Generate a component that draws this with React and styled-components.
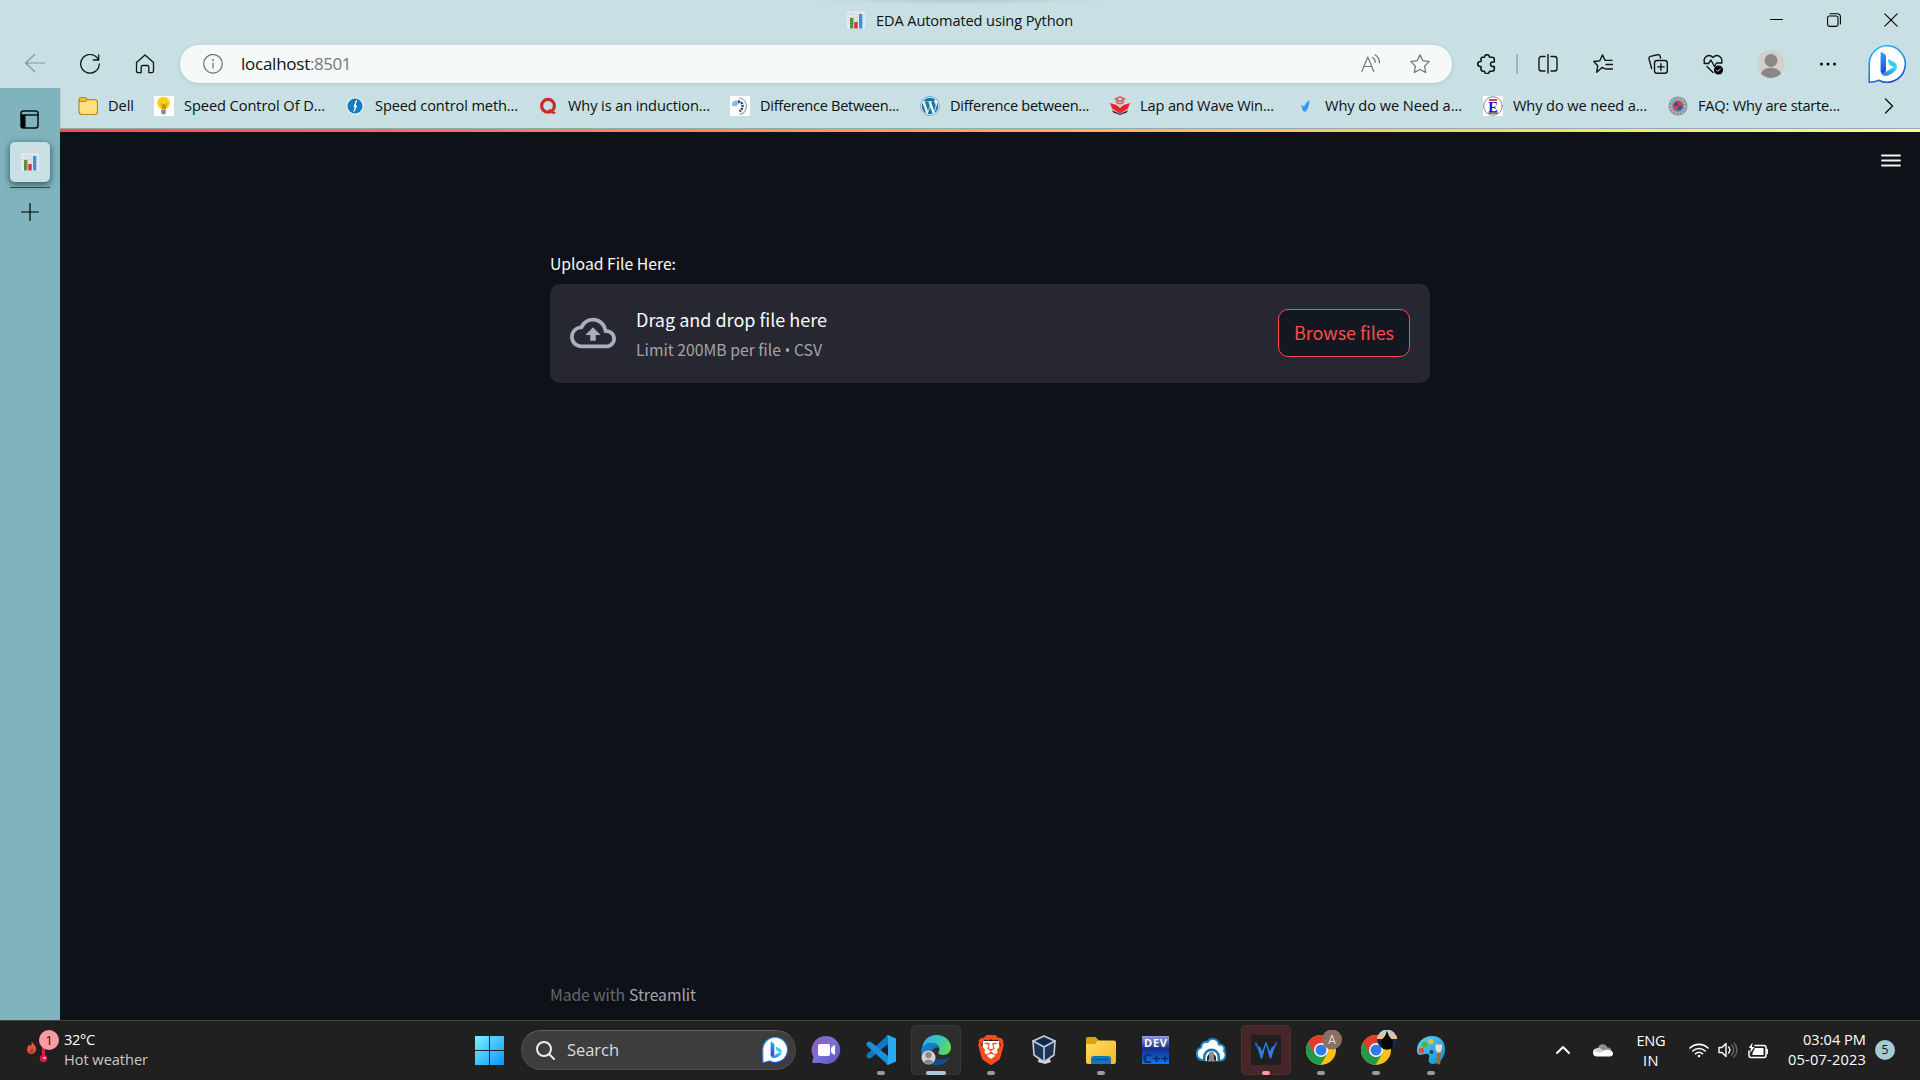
import React, { useLayoutEffect, useRef, useState } from 'react';
import styled, { createGlobalStyle } from 'styled-components';
import { SiBrave } from 'react-icons/si';
import { FaWordpress } from 'react-icons/fa';

const GlobalStyle = createGlobalStyle`
  html, body { margin: 0; padding: 0; background: #0e1117; overflow: hidden; }
  * { box-sizing: border-box; }
  svg { display: block; flex: none; }
`;

const ui = '"Open Sans", "Noto Sans", sans-serif';
const source = '"Noto Sans CJK SC", "Noto Sans", sans-serif';

/* Text whose tracking is adjusted so that it fills a known width */
const Label = styled.span`
  display: block;
  flex: none;
  width: max-content;
  white-space: pre;
  font-family: ${p => (p.$source ? source : ui)};
  font-size: ${p => p.$size || 14.6}px;
  line-height: ${p => p.$line || 20}px;
  color: ${p => p.$color || '#0b1112'};
`;
const Bullet = styled.span`
  font-family: "Open Sans", sans-serif;
`;

function Text({ width, children, ...rest }) {
  const ref = useRef(null);
  const [spacing, setSpacing] = useState(0);
  useLayoutEffect(() => {
    if (!width) return;
    const chars = ref.current.textContent.length;
    setSpacing((width + 1 - ref.current.getBoundingClientRect().width) / chars);
  }, [width]);
  return <Label ref={ref} style={{ letterSpacing: spacing }} {...rest}>{children}</Label>;
}

const Screen = styled.div`
  width: 1920px;
  height: 1080px;
  display: flex;
  flex-direction: column;
  background: #c8dfe3;
  overflow: hidden;
`;
const TitleBar = styled.header`
  height: 40px;
  flex: none;
  display: flex;
  align-items: center;
  padding-left: 847px;
  background: radial-gradient(ellipse 150px 5px at 960px 0, #b5cbcf, #c8dfe3);
`;
const TabTitle = styled.div`
  display: flex;
  align-items: center;
  gap: 11px;
`;
const WindowControls = styled.div`
  display: flex;
  align-items: center;
  margin-left: auto;
`;
const Cell = styled.div`
  width: ${p => p.$w || 55}px;
  height: 40px;
  flex: none;
  display: flex;
  align-items: center;
  justify-content: center;
`;
const Toolbar = styled.div`
  height: 48px;
  flex: none;
  display: flex;
  align-items: center;
  padding-left: 7.5px;
`;
const AddressBar = styled.div`
  width: 1272px;
  height: 38px;
  flex: none;
  margin: 0 7px 0 7.5px;
  padding: 0 22px 0 23px;
  display: flex;
  align-items: center;
  border-radius: 19px;
  background: #f5f9fa;
  box-shadow: 0 1px 4px rgba(90, 130, 138, 0.22);
`;
const Url = styled.div`
  display: flex;
  margin-left: 18px;
`;
const AddressActions = styled.div`
  display: flex;
  gap: 29px;
  margin-left: auto;
`;
const Divider = styled.div`
  width: 2px;
  height: 20px;
  margin: 0 2px;
  background: #9fb3b6;
`;
const Middle = styled.div`
  height: 932px;
  flex: none;
  display: flex;
`;
const Sidebar = styled.nav`
  width: 60px;
  flex: none;
  display: flex;
  flex-direction: column;
  align-items: center;
  padding-top: 22px;
  background: #7fb4bf;
`;
const PanelToggle = styled.div`
  padding-right: 2px;
`;
const NewTab = styled.div`
  padding-right: 1px;
`;
const SideTab = styled.div`
  width: 40px;
  height: 40px;
  margin-top: 13px;
  display: flex;
  align-items: center;
  justify-content: center;
  border-radius: 5px;
  background: #c8dfe3;
  box-shadow: 0 2px 6px 1px rgba(20, 45, 50, 0.6);
`;
const SideRule = styled.div`
  width: 40px;
  height: 1px;
  margin: 5px 0 15px;
  background: #2f4b50;
`;
const Frame = styled.div`
  flex: 1;
  min-width: 0;
  display: flex;
  flex-direction: column;
`;
const Bookmarks = styled.div`
  height: 41px;
  flex: none;
  display: flex;
  align-items: center;
  padding: 0 0 4px 17px;
  border-bottom: 1px solid #90aaae;
  border-left: 1px solid #b9d0d4;
`;
const Bookmark = styled.div`
  width: ${p => p.$w}px;
  flex: none;
  display: flex;
  align-items: center;
  gap: 10px;
`;
const Raised = styled.div`
  padding-bottom: ${p => p.$by || 2}px;
`;
const Decoration = styled.div`
  height: 3px;
  flex: none;
  background: linear-gradient(90deg, #ff4b4b, #fffd80);
`;
const Page = styled.main`
  flex: 1;
  display: flex;
  flex-direction: column;
  background: #0e1117;
`;
const MenuRow = styled.div`
  display: flex;
  justify-content: flex-end;
  padding: 22px 19px 0 0;
`;
const Block = styled.section`
  width: 880px;
  flex: 1;
  margin: 83px 0 0 490px;
  display: flex;
  flex-direction: column;
`;
const Dropzone = styled.div`
  height: 99px;
  margin-top: 7px;
  padding: 0 20px 2px;
  display: flex;
  align-items: center;
  border-radius: 10px;
  background: #262730;
`;
const DropText = styled.div`
  margin-left: 20px;
  display: flex;
  flex-direction: column;
`;
const BrowseButton = styled.button`
  width: 132px;
  height: 48px;
  margin-left: auto;
  padding: 0 0 1px;
  display: flex;
  align-items: center;
  justify-content: center;
  border: 1px solid #ff4b4b;
  border-radius: 10px;
  background: #131720;
`;
const Footer = styled.footer`
  display: flex;
  gap: 4px;
  margin: auto 0 12px;
`;
const Taskbar = styled.footer`
  height: 60px;
  flex: none;
  display: flex;
  align-items: center;
  padding-bottom: 1px;
  border-top: 1px solid #454647;
  background: #202020;
`;
const Weather = styled.div`
  width: 461px;
  display: flex;
  align-items: center;
  padding-left: 25px;
`;
const WeatherText = styled.div`
  margin-left: -1px;
  padding-bottom: 3px;
`;
const Stack = styled.div`
  display: flex;
  flex-direction: column;
  align-items: ${p => p.$align || 'flex-start'};
`;
const TaskCell = styled.div`
  position: relative;
  width: 55px;
  height: 58px;
  flex: none;
  display: flex;
  align-items: center;
  justify-content: center;
`;
const StartCell = styled(TaskCell)`
  width: 57px;
`;
const Tile = styled.div`
  width: 50px;
  height: 50px;
  display: flex;
  align-items: center;
  justify-content: center;
  border-radius: 5px;
  background: ${p => p.$bg || 'transparent'};
  box-shadow: ${p => (p.$bg ? 'inset 0 0 0 1px rgba(255,255,255,0.05)' : 'none')};
`;
const Indicator = styled.div`
  position: absolute;
  bottom: 4px;
  left: 50%;
  transform: translateX(-50%);
  width: ${p => p.$w || 8}px;
  height: 4px;
  border-radius: 2px;
  background: ${p => p.$c || '#9b9b9b'};
`;
const SearchBox = styled.div`
  width: 275px;
  height: 40px;
  margin: 0 2px 0 3px;
  padding: 0 7px 0 14px;
  flex: none;
  display: flex;
  align-items: center;
  gap: 12px;
  border-radius: 20px;
  border: 1px solid #4b4b4b;
  border-top-color: #606060;
  background: #3d3d3d;
`;
const Push = styled.div`
  margin-left: auto;
`;
const Tray = styled.div`
  margin-left: auto;
  padding-right: 25px;
  display: flex;
  align-items: center;
`;
const TraySlot = styled.div`
  width: ${p => p.$w}px;
  flex: none;
  display: flex;
  justify-content: center;
`;
const CountBadge = styled.div`
  width: 20px;
  height: 20px;
  margin-left: 9px;
  display: flex;
  align-items: center;
  justify-content: center;
  border-radius: 50%;
  background: #a6cbd4;
`;

const Svg = ({ w = 20, h, box, stroke = '#111718', sw = 1.5, fill = 'none', children }) => (
  <svg width={w} height={h || w} viewBox={box || `0 0 ${w} ${h || w}`} fill={fill} stroke={stroke}
    strokeWidth={sw} strokeLinecap="round" strokeLinejoin="round">{children}</svg>
);

const ChartIcon = ({ s = 18 }) => (
  <Svg w={s} box="0 0 18 18" stroke="none">
    <rect width="18" height="18" rx="1.5" fill="#e6ebf1" />
    <path d="M1 3.500h16M1 6.500h16M1 9.500h16M1 12.500h16M4 1v16M7 1v16M10 1v16M13 1v16" stroke="#ccd3dc" strokeWidth=".7" />
    <rect x="3" y="7" width="3.4" height="10.5" fill="#5c913b" />
    <rect x="7.3" y="11" width="3.4" height="6.5" fill="#dd2e44" />
    <rect x="12" y="3" width="3.4" height="14.5" fill="#3b94d9" />
  </Svg>
);

const BingBubble = ({ s = 38, id }) => (
  <Svg w={s} box="0 0 38 38" stroke="none">
    <defs>
      <linearGradient id={`${id}r`} x1=".2" y1="0" x2=".6" y2="1">
        <stop offset="0" stopColor="#22b5f0" /><stop offset=".55" stopColor="#2f86e8" /><stop offset="1" stopColor="#1c4fd0" />
      </linearGradient>
      <linearGradient id={`${id}a`} x1="0" y1="0" x2="0" y2="1">
        <stop offset="0" stopColor="#2fa5f5" /><stop offset="1" stopColor="#1b48cf" />
      </linearGradient>
      <linearGradient id={`${id}b`} x1="1" y1="0" x2="0" y2="1">
        <stop offset="0" stopColor="#38dcf0" /><stop offset="1" stopColor="#2a6be6" />
      </linearGradient>
    </defs>
    <path d="M19 .8a18.2 18.2 0 1 1-8.2 34.400c-1 .5-4.800 2-9.600 2V19A18 18 0 0 1 19 .8z" fill="#fff" stroke={`url(#${id}r)`} strokeWidth="1.600" />
    <path d="M12.600 7.800c0-.8 1-.9 1.700-.4l2.900 2c.6.4.8 1 .8 1.700v14.200c0 2-1.600 3.100-2.800 3.100-1.500 0-2.600-1.300-2.600-3z" fill={`url(#${id}a)`} />
    <path d="M20 15c-.2-.6.3-.9.9-.6l4.800 2.500c2.300 1.300 3.200 3 3.200 5 0 1.200-.5 2.200-1.200 3-.2-2.100-1.300-2.800-3-3.500l-2.300-1c-.9-.4-1.200-.9-1.500-1.700z" fill="#35cdf0" />
    <path d="M28 24.700c-1 2-3.300 3.200-5.600 4.500-2.400 1.400-4.500 2.200-7 1.200-1.700-.7-2.700-2.600-2.700-4.500.8 2.200 3.200 2.300 5 1.200l7.300-4.500c1.500-.9 3 .2 3 2.100z" fill={`url(#${id}b)`} />
  </Svg>
);

const Chrome = ({ children }) => (
  <Svg w={42} h={40} box="-1 0 42 40" stroke="none">
    <circle cx="20" cy="20" r="15" fill="#fbc116" />
    <path d="M7 12.500a15 15 0 0 0 12.500 22.500L26.500 23.500 20 20z" fill="#229a4a" />
    <path d="M7 12.500A15 15 0 0 1 33 12.500L20 13.200 13.500 23.500z" fill="#e33b2e" />
    <circle cx="20" cy="20" r="7" fill="#fff" />
    <circle cx="20" cy="20" r="5.500" fill="#2e7bee" />
    {children}
  </Svg>
);

const EdgeIcon = () => (
  <Svg w={30} stroke="none">
    <defs>
      <linearGradient id="eg1" x1="0" y1=".3" x2="1" y2=".6"><stop offset="0" stopColor="#2bb0e6" /><stop offset=".5" stopColor="#35c5c0" /><stop offset="1" stopColor="#62dd52" /></linearGradient>
      <linearGradient id="eg2" x1="0" y1="0" x2=".8" y2="1"><stop offset="0" stopColor="#1b8fdc" /><stop offset="1" stopColor="#0b4f9e" /></linearGradient>
    </defs>
    <path d="M1 13C2 5 8 0 15.500 0 24 0 30 6 30 12.500c0 4.500-3.500 7.500-7.800 7.500-3.500 0-5-1.200-5-2.200 0-.8 1.300-1.500 1.300-3.800C18.500 10.500 14.500 8 10.500 8 6 8 2.500 10 1 13z" fill="url(#eg1)" />
    <path d="M.1 15.500C.5 11 5 8 10.500 8c4 0 7.500 2.200 8 5.500-3-2-7.500-.3-8 4.500-.5 5 3.500 10 9.500 11.200-1.500.5-3 .8-5 .8C6 30 0 23 .1 15.500z" fill="url(#eg2)" />
    <path d="M11 15c-1.500 6 3.500 10 9 9.500 3 0 5.500-1 7.300-1.800.7-.3 1.200.3.800 1C25.500 27.500 22 30 17 30 11 30 6 24 11 15z" fill="#104e91" />
    <circle cx="7.500" cy="22.500" r="7" fill="#d2d0ce" />
    <circle cx="7.500" cy="20" r="3.100" fill="#8a8886" />
    <path d="M2.800 27.500c1-4 8.400-4 9.400 0a7 7 0 0 1-9.400 0z" fill="#8a8886" />
  </Svg>
);

const bookmarks = [
  { w: 76, t: 'Dell', tw: 25, icon: <Svg w={20} stroke="#b98a1c" sw={1.2}><path d="M1 5.200V15.500a3 3 0 0 0 3 3H16.500a3 3 0 0 0 3-3V6.700a3 3 0 0 0-3-3H9" fill="#ffdf80" /><path d="M1 4.500Q1 1.500 3.500 1.500H6.500Q8 1.500 9.200 3.300Q8 5.500 6.500 5.500H1z" fill="#eec22e" /></Svg> },
  { w: 191, t: 'Speed Control Of D...', tw: 140, icon: <Svg w={20} stroke="none"><path fill="#fff" d="M0 0h20v20H0z" /><circle cx="9.500" cy="7" r="6.300" fill="#fdd017" /><path d="M6 10h7l-1.500 4.500h-4z" fill="#fdd017" /><path d="M7.500 7.500 9 13l1-5 1 5 1.500-5.500" stroke="#a17e00" strokeWidth=".8" fill="none" /><path d="M7.200 14h4.600v3l-1.500 1.600H8.700L7.200 17z" fill="#8c8792" /></Svg> },
  { w: 193, t: 'Speed control meth...', tw: 142, icon: <Svg w={20} stroke="none"><circle cx="10" cy="10" r="9" fill="#e5eef3" /><circle cx="10" cy="10" r="7.500" fill="#147cc2" /><path d="m11.500 4.500-2.500 6 1.500.3-1.500 4.700 2.500-5.500-1.300-.5z" fill="#fff" stroke="#fff" strokeWidth="1" /></Svg> },
  { w: 192, t: 'Why is an induction...', tw: 141, icon: <Svg w={20} stroke="#c92c2c" sw={3.2}><circle cx="10" cy="9.800" r="6.400" /><path d="m11.500 14 3 2.700h2" strokeWidth="2" /></Svg> },
  { w: 190, t: 'Difference Between...', tw: 138, icon: <Svg w={20} stroke="none"><path fill="#fff" d="M0 0h20v20H0z" /><path d="M2 9.500C1.500 6 4 4 7.500 4.500L9 7.500 6.500 10l-3 .5z" fill="#8dbbd6" /><path d="M8 5.500c5 0 6.500 6 1.500 10" stroke="#24496e" strokeWidth="2.400" strokeDasharray="2.200 .8" strokeLinecap="butt" fill="none" /><path d="M9.500 2c9 1 9 15 .5 16.500" stroke="#7ea2b8" strokeWidth="1.200" fill="none" /></Svg> },
  { w: 190, t: 'Difference between...', tw: 138, icon: <Svg w={20} stroke="none"><circle cx="10" cy="10" r="10" fill="#e7f3f7" /><foreignObject width="20" height="20"><FaWordpress size={20} color="#1876a3" /></foreignObject></Svg> },
  { w: 185, t: 'Lap and Wave Win...', tw: 133, icon: <Svg w={20} stroke="none"><path d="M5.500 3 10 .8 14.500 3 10 5.500zM6.500 5.500c1 3 6 3 7 0" stroke="#d8575b" fill="none" /><path d="m0 7 7 2.300L10 12l3-2.700L20 7l-2 5.500-8 5.200-8-5.200z" fill="#ee2328" /><path d="m2 14 1 2.500 7 2.500 7-2.500 1-2.500-8 4z" fill="#34353a" /></Svg> },
  { w: 188, t: 'Why do we Need a...', tw: 136, icon: <Svg w={20} stroke="none"><path d="M6.500 9c1 .2 2 1 2.500 2 1-3 3-5.500 5.500-7-.3 5.500-1.500 9-3.500 11.200-1 .8-2 .6-2.700-.3C7 13 6.500 11 6.500 9z" fill="#3399ff" /></Svg> },
  { w: 185, t: 'Why do we need a...', tw: 133, icon: <Svg w={20} stroke="none"><path fill="#fff" d="M0 0h20v20H0z" /><circle cx="10" cy="10" r="9.300" stroke="#777" strokeWidth=".9" /><path d="M6 3h8v2H6z" fill="#e0453c" /><text x="10" y="15.500" textAnchor="middle" fontFamily="Liberation Serif" fontWeight="bold" fontSize="14.500" fill="#1414c8">E</text><path d="M6 17h8" stroke="#444" strokeWidth="1.500" /></Svg> },
  { w: 189, t: 'FAQ: Why are starte...', tw: 141, icon: <Svg w={20} stroke="none"><circle cx="10" cy="10" r="9.500" fill="#7f98a5" /><circle cx="10" cy="10" r="7.300" stroke="#d6b48a" strokeWidth="2" strokeDasharray="1.800 1.400" strokeLinecap="butt" /><circle cx="10" cy="10" r="4.700" fill="#2d54a5" /><path d="M10 5.300A4.700 4.700 0 0 1 14.700 10H10v4.700A4.700 4.700 0 0 1 5.300 10H10z" fill="#e23c3f" /></Svg> },
];

const tasks = [
  { icon: <Svg w={30} stroke="none"><defs><linearGradient id="cg" x1="0" y1="0" x2="1" y2="1"><stop offset="0" stopColor="#8d5bb0" /><stop offset=".5" stopColor="#7b71d8" /><stop offset="1" stopColor="#4f52c4" /></linearGradient></defs><path d="M15 1a14 14 0 1 1-5 27H2.500c-1 0-1.500-.7-1.200-1.600L2.500 22A14 14 0 0 1 15 1z" fill="url(#cg)" /><rect x="7" y="9" width="12" height="12" rx="2" fill="#fff" /><path d="m20 13 2.500-2.500c.7-.7 1.500-.3 1.500.5v8c0 .8-.8 1.200-1.500.5L20 17z" fill="#fff" /></Svg> },
  { ind: 8, icon: <Svg w={30} stroke="none"><path d="M22 0 1 19l-.8 2.500 2.500 2L5 23 22 9z" fill="#0f79be" /><path d="M22 30 1 11 .2 8.500l2.500-2L5 7l17 14z" fill="#1a8fd6" /><path d="m22 0 8 3.500v23L22 30l-1.500-1 1.500-1V2l-1.500-1z" fill="#29a9f2" /></Svg> },
  { bg: '#2d2d2d', ind: 20, c: '#a5cbd4', icon: <EdgeIcon /> },
  { ind: 8, icon: <Svg w={30} stroke="none"><path d="M7 6h16l1 12-9 8-9-8z" fill="#fff" /><foreignObject width="30" height="30"><SiBrave size={30} color="#fb4b1d" /></foreignObject></Svg> },
  { icon: <Svg w={30} box="1 0 30 30" stroke="#c5cdd9" sw={1.6}><path d="M9 22h10l2 5-6 2-7-2z" fill="#d5d8e0" stroke="none" /><path d="m14 1 11 5-1 14-10 7-10-7L3 6z" fill="#1d3558" /><path d="M3 6l11 6 11-6M14 12v15" /><path d="m7 6 7-3 7 3-7 4z" fill="#12294a" stroke="none" /></Svg> },
  { ind: 8, icon: <Svg w={30} stroke="none"><defs><linearGradient id="fg" x1="0" y1="0" x2="1" y2="1"><stop offset="0" stopColor="#ffdb66" /><stop offset="1" stopColor="#f6b920" /></linearGradient></defs><path d="M0 4Q0 2 2 2h7.500l3.500 3.500V10H0z" fill="#dda10e" /><path d="M0 9h9l3-3.500h16q2 0 2 2V26q0 3-2 3H2q-2 0-2-3z" fill="url(#fg)" /><path d="M5 29v-5q0-3 3-3h14q3 0 3 3v5z" fill="#1475bd" /><path d="M9 24.500h12" stroke="#0c4f8a" strokeWidth="1.200" /></Svg> },
  { icon: <Svg w={30} h={32} stroke="none"><defs><linearGradient id="dg" x1="0" y1="0" x2="0" y2="1"><stop offset="0" stopColor="#939fd8" /><stop offset=".45" stopColor="#172b8c" /><stop offset="1" stopColor="#0e79ec" /></linearGradient></defs><path d="M1 2h27v28H1z" fill="url(#dg)" /><text x="14.500" y="13" textAnchor="middle" fontFamily="Open Sans" fontWeight="bold" fontSize="11" textLength="23" fill="#fff">DEV</text><text x="15" y="28.500" textAnchor="middle" fontFamily="Open Sans" fontWeight="bold" fontSize="11.500" textLength="27" lengthAdjust="spacingAndGlyphs" fill="#083165">C++</text></Svg> },
  { icon: <Svg w={30} stroke="none"><path d="M6 25a6.500 6.500 0 0 1-1-12.500C5 8 9 6 11.500 7 14 2 22 3 23 9.500c4-.5 6.500 3 5 6.500 3 3 1.500 9-3 9.500z" fill="#fff" stroke="#1982ba" strokeWidth="2" /><path d="M7 26v-4a8.500 8.500 0 0 1 17 0v4z" fill="#1879ad" /><path d="M9.500 26v-4a6 6 0 0 1 12 0v4z" fill="#fff" /><path d="M11 27v-4a4.500 4.500 0 0 1 9 0v4z" fill="#202020" /><path d="M13 24v-5a2.500 2.500 0 0 1 5 0v5l2 2.500h-9z" fill="#8a8a8a" /></Svg> },
  { bg: '#462628', ind: 8, c: '#ff99a4', icon: <Svg w={30} stroke="#2580e8" sw={2.2}><path fill="#202020" stroke="none" d="M0 0h30v30H0z" /><path d="M5 7.500v2.500M25 7.500v2.500" strokeWidth="1.200" /><path d="m6 10 2 5 2.500 8 2-8 2.500-7 2.500 7 2 8 2.500-8 2-5" strokeWidth="1.400" /><path d="m8.500 13 2 8 1.500-5M21.500 13l-2 8-1.500-5" strokeWidth="2.400" /></Svg> },
  { ind: 8, icon: <Chrome><circle cx="31" cy="9.500" r="10" fill="#8d6e63" /><text x="31" y="14" textAnchor="middle" fontFamily="Roboto" fontSize="12" fill="#e3d9d5">A</text></Chrome> },
  { ind: 8, icon: <Chrome><clipPath id="av"><circle cx="31" cy="9.500" r="10" /></clipPath><g clipPath="url(#av)"><path fill="#c6c8cb" d="M20-1h22v10H20z" /><path fill="#e4c58e" d="M20 5h22v4H20z" /><path fill="#172b3e" d="M20 9h22v12H20z" /><path fill="#050607" d="m31 1 2 5 4 5-1 9H26l-1-9 4-5z" /></g></Chrome> },
  { ind: 8, icon: <Svg w={30} stroke="none"><defs><linearGradient id="pg" x1="0" y1="0" x2="1" y2="1"><stop offset="0" stopColor="#59d7f5" /><stop offset="1" stopColor="#1686ce" /></linearGradient></defs><path d="M16 1C25 1 29 7 29 14c0 8-5 15-12 15-4 0-5-3-4-6 1-4-1-5-4-4-4 1-7 2-8-2C0 8 7 1 16 1z" fill="url(#pg)" /><circle cx="15" cy="6.500" r="2.600" fill="#f3c21a" /><circle cx="8.500" cy="9.500" r="2.700" fill="#52b22c" /><circle cx="5.500" cy="15.500" r="2.700" fill="#e0532b" /><circle cx="15.500" cy="17" r="2" fill="#124c7d" /><path d="M21 17h3.400v11q-1.700 3-3.400 0z" fill="#b5661b" /><path d="M19.500 9.500h6.500v4l-1.600 4H21l-1.500-4z" fill="#eddcc7" /></Svg> },
];

export default function App() {
  return (
    <Screen>
      <GlobalStyle />
      <TitleBar>
        <TabTitle>
          <ChartIcon />
          <Text width={196}>EDA Automated using Python</Text>
        </TabTitle>
        <WindowControls>
          <Cell $w={57}><Svg w={14} sw={1} stroke="#000"><path d="M.5 6.500h12" /></Svg></Cell>
          <Cell $w={57}><Svg w={14} sw={1.1} stroke="#000"><rect x=".6" y="3" width="10.400" height="10.400" rx="1.800" /><path d="M3 .7h7.500a2.900 2.900 0 0 1 2.900 2.900V11" /></Svg></Cell>
          <Cell $w={58}><Svg w={14} sw={1.1} stroke="#000"><path d="m.8.8 12.400 12.400M13.200.8.800 13.200" /></Svg></Cell>
        </WindowControls>
      </TitleBar>
      <Toolbar>
        <Cell><Svg sw={1.2} stroke="#82989c"><path d="M.5 9h19M9.500.5.800 9l8.700 8.500" /></Svg></Cell>
        <Cell><Svg sw={1.3}><path d="M18.500 6A9.300 9.300 0 1 0 19.300 10M18.700.8V6h-5.400" /></Svg></Cell>
        <Cell><Svg sw={1.3}><path d="M1.500 8.500 10 .9l8.500 7.600V17q0 1.700-1.700 1.700h-3V13q0-1.500-1.500-1.500H7.700Q6.200 11.500 6.200 13v5.700h-3Q1.500 18.700 1.500 17z" /></Svg></Cell>
        <AddressBar>
          <Svg sw={1.2} stroke="#6b6f70"><circle cx="10" cy="9.800" r="9.300" /><path d="M10 9v5" /><circle cx="10" cy="6" r=".4" /></Svg>
          <Url>
            <Text width={68} $size={17} $line={24}>localhost</Text>
            <Text width={40} $size={17} $line={24} $color="#74787a">:8501</Text>
          </Url>
          <AddressActions>
            <Svg sw={1.2} stroke="#737778"><path d="M.8 17.500 6.800 3l6 14.500M3 12.500h7.800M11.500 3.500a5.500 5.500 0 0 1 2.700 5M14 .8a9.500 9.500 0 0 1 4.500 8" /></Svg>
            <Svg sw={1.3} stroke="#737778"><path d="m10 .9 2.800 5.800 6.400.9-4.600 4.500 1.100 6.400-5.700-3-5.700 3 1.100-6.400L.8 7.600l6.400-.9z" /></Svg>
          </AddressActions>
        </AddressBar>
        <Cell><Svg sw={1.6}><path d="M5 3.200h2.500a2.500 2.500 0 1 1 5 0H15q2.300 0 2.300 2.200V8h-1.500a2.200 2.200 0 1 0 0 4.500h1.500V15q0 2.200-2.300 2.200h-2.500a2.500 2.500 0 1 1-5 0H6.300q-2.300 0-2.300-2.200v-2.500h-.7a2.500 2.500 0 1 1 0-5H4V5q0-1.800 1.800-1.800z" /></Svg></Cell>
        <Divider />
        <Cell><Svg sw={1.4}><path d="M7 2.500H3.500Q1 2.500 1 5v9.500Q1 17 3.500 17H7M13 2.500h3.500Q19 2.500 19 5v9.500q0 2.500-2.500 2.500H13M10 .5V19" /></Svg></Cell>
        <Cell><Svg sw={1.4}><path d="M11.300 14.500 9 13.500l-5.300 4.700 1-6.500L.8 7.500l6-.8L9.500.9l2.600 5.500H19M13 10.500h6.500M12.500 15h7" /></Svg></Cell>
        <Cell><Svg sw={1.4}><rect x="6.500" y="6.500" width="12.800" height="12.800" rx="2.500" /><path d="M12.900 9.700v6.500M9.700 12.900h6.500M3.700 14.500 1 5Q.5 3 2.500 2.400L9.500.7q2-.5 2.600 1.500l.5 1.800" /></Svg></Cell>
        <Cell $w={56}><Svg w={21} box="0 0 21 21" sw={1.4}><path d="M1.500 8.500C-.5 3 6-.8 10 3.500c4-4.300 10.500-.5 8.500 5M1 9.500h4.500L8 6l3.500 6.500L13.500 9h5.500M4 12.500l6 6" /><circle cx="15.500" cy="16" r="4.600" fill="#000" stroke="none" /><path d="m13.500 16 1.400 1.400 2.600-2.600" stroke="#dceaec" strokeWidth="1" /></Svg></Cell>
        <Cell $w={59}><Svg w={28} stroke="none"><circle cx="14" cy="14" r="14" fill="#d2d0ce" /><circle cx="14" cy="10.500" r="6.500" fill="#8a8886" /><path d="M4 23.800c2.500-8 17.500-8 20 0a14 14 0 0 1-20 0z" fill="#8a8886" /></Svg></Cell>
        <Cell $w={56}><Svg w={18} h={4} stroke="none" fill="#000"><circle cx="2.500" cy="2" r="1.500" /><circle cx="9" cy="2" r="1.500" /><circle cx="15.500" cy="2" r="1.500" /></Svg></Cell>
        <Cell $w={62}><BingBubble id="top" /></Cell>
      </Toolbar>
      <Middle>
        <Sidebar>
          <PanelToggle><Svg w={19} sw={1.5} stroke="#0a0f10"><rect x="1" y="1" width="17" height="17" rx="2.500" /><path d="M1 5h17" /><path d="M1 5h4.500v13H3a2 2 0 0 1-2-2z" fill="#000" stroke="none" /></Svg></PanelToggle>
          <SideTab><ChartIcon /></SideTab>
          <SideRule />
          <NewTab><Svg w={18} sw={1.2} stroke="#000"><path d="M9 .5v17M.5 9h17" /></Svg></NewTab>
        </Sidebar>
        <Frame>
          <Bookmarks>
            {bookmarks.map(b => (
              <Bookmark key={b.t} $w={b.w}>{b.icon}<Raised><Text width={b.tw}>{b.t}</Text></Raised></Bookmark>
            ))}
            <Cell $w={63}><Svg w={10} h={16} sw={1.4}><path d="m1.500 1 7 7-7 7" /></Svg></Cell>
          </Bookmarks>
          <Decoration />
          <Page>
            <MenuRow><Svg w={20} h={14} sw={1.800} stroke="#f2f2f3"><path d="M1 1.500h18M1 6.500h18M1 11.500h18" /></Svg></MenuRow>
            <Block>
              <Text $source width={125} $size={15.75} $line={26} $color="#fafafa">Upload File Here:</Text>
              <Dropzone>
                <Svg w={46} h={32} box="0 4 24 16" stroke="none" fill="#a9adc1"><path d="M19.350 10.040A7.490 7.490 0 0 0 12 4C9.110 4 6.600 5.640 5.350 8.040A5.994 5.994 0 0 0 0 14c0 3.310 2.690 6 6 6h13c2.760 0 5-2.240 5-5 0-2.640-2.050-4.780-4.650-4.960zM19 18H6c-2.210 0-4-1.790-4-4 0-2.050 1.530-3.760 3.560-3.970l1.070-.11.500-.95A5.469 5.469 0 0 1 12 6c2.620 0 4.880 1.860 5.390 4.430l.3 1.500 1.530.11A2.980 2.980 0 0 1 22 15c0 1.650-1.350 3-3 3zM8 13h2.550v3h2.900v-3H16l-4-4z" /></Svg>
                <DropText>
                  <Text $source width={190} $size={18} $line={34} $color="#fafafa">Drag and drop file here</Text>
                  <Text $source width={185} $size={15.75} $line={28} $color="#a3a4a8">Limit 200MB per file <Bullet>•</Bullet> CSV</Text>
                </DropText>
                <BrowseButton><Text $source width={99} $size={18} $line={30} $color="#ff4b4b">Browse files</Text></BrowseButton>
              </Dropzone>
              <Footer>
                <Text $source width={74} $size={15.75} $line={26} $color="#66686c">Made with</Text>
                <Text $source width={66} $size={15.75} $line={26} $color="#a4a5a7">Streamlit</Text>
              </Footer>
            </Block>
          </Page>
        </Frame>
      </Middle>
      <Taskbar>
        <Weather>
          <Svg w={40} h={40} stroke="none">
            <path d="M6.500 12c4 3 5 5.500 4.500 8-.5 2.800-2.500 4-4.500 4S2 22.500 2 19.500C2 17 3.500 16 4 14.500c.8.5 1.300 1 1.500 2 1-1.500 1.300-3 1-4.500z" fill="#e8533f" />
            <path d="M7 18c2 2 2 5-.5 5.500C4 23 4.500 20 7 18z" fill="#9c4a33" />
            <path d="M17 12h3v14h-3z" fill="#c7254b" /><circle cx="18.500" cy="28.500" r="3.800" fill="#cf1f4a" /><circle cx="19.500" cy="28" r="1.300" fill="#f7c5d0" />
            <circle cx="24" cy="10" r="10" fill="#ff9aa2" />
            <text x="24" y="14.800" textAnchor="middle" fontFamily="Open Sans" fontSize="13.500" fill="#2a1517">1</text>
          </Svg>
          <WeatherText>
            <Stack>
              <Text width={30} $color="#fff">32°C</Text>
              <Text width={83} $color="#c9c9c9">Hot weather</Text>
            </Stack>
          </WeatherText>
        </Weather>
        <StartCell>
          <Svg w={29} stroke="none"><defs><linearGradient id="win" x1="0" y1="0" x2="1" y2="1"><stop offset="0" stopColor="#7df0ff" /><stop offset="1" stopColor="#0795fb" /></linearGradient></defs><path d="M0 0h14v14H0zM15 0h14v14H15zM0 15h14v14H0zM15 15h14v14H15z" fill="url(#win)" /></Svg>
        </StartCell>
        <SearchBox>
          <Svg w={19} sw={2} stroke="#ececec"><circle cx="8" cy="8" r="7" /><path d="m13 13 5 5" /></Svg>
          <Text width={51} $size={16.500} $color="#dcdcdc">Search</Text>
          <Push><BingBubble s={26} id="task" /></Push>
        </SearchBox>
        {tasks.map((t, i) => (
          <TaskCell key={i}>
            <Tile $bg={t.bg}>{t.icon}</Tile>
            {t.ind && <Indicator $w={t.ind} $c={t.c} />}
          </TaskCell>
        ))}
        <Tray>
          <TraySlot $w={40}><Svg w={16} h={10} sw={2} stroke="#fff"><path d="m2 8 6-6 6 6" /></Svg></TraySlot>
          <TraySlot $w={40}><Svg w={20} h={14} stroke="none"><path d="M5 8a5 5 0 0 1 9.500-3.500C17 4 18 6 18.500 8l-7 3z" fill="#8f8f8f" /><path d="M4 13.500a4 4 0 0 1 0-8C7 4.500 9 7 10 8c3-2 9-1.500 10 2 .2 2-1 3.500-3 3.500z" fill="#fff" /><path d="M4 5.500C7 4.500 9 7 10 8l-3 2L1 8z" fill="#d0d0d0" /></Svg></TraySlot>
          <TraySlot $w={56}>
            <Raised $by={1}><Stack $align="center"><Text width={28} $color="#fff">ENG</Text><Text width={15} $color="#fff">IN</Text></Stack></Raised>
          </TraySlot>
          <TraySlot $w={39}><Svg w={20} h={16} sw={1.600} stroke="#fff"><path d="M1 6a13 13 0 0 1 18 0M3.800 9a9 9 0 0 1 12.400 0M6.500 11.800a5 5 0 0 1 7 0" /><circle cx="10" cy="14" r="1.300" fill="#fff" stroke="none" /></Svg></TraySlot>
          <TraySlot $w={20}><Svg w={20} h={16} sw={1.400} stroke="#fff"><path d="M1 5.500h3L8 1.500v13l-4-4H1zM10.500 5a4 4 0 0 1 0 6" /><path d="M13.500 3a7 7 0 0 1 0 10M16 1a10 10 0 0 1 0 14" stroke="#666" /></Svg></TraySlot>
          <TraySlot $w={40}><Svg w={20} h={17} sw={1.500} stroke="#fff"><path d="M7 3.500h9q2 0 2 2v8q0 2-2 2H3q-2 0-2-2V9" /><path d="M19.300 7.500v4" /><path d="M7 6h8.500v7H4.500V11z" fill="#fff" stroke="none" /><path d="M4.500.5.800 6H3l-1 5L6.500 5H4z" fill="#fff" stroke="none" /></Svg></TraySlot>
          <TraySlot $w={88}>
            <Push><Raised $by={3}><Stack $align="flex-end"><Text width={62} $color="#fff">03:04 PM</Text><Text width={77} $color="#fff">05-07-2023</Text></Stack></Raised></Push>
          </TraySlot>
          <CountBadge><Text $size={12}>5</Text></CountBadge>
        </Tray>
      </Taskbar>
    </Screen>
  );
}
